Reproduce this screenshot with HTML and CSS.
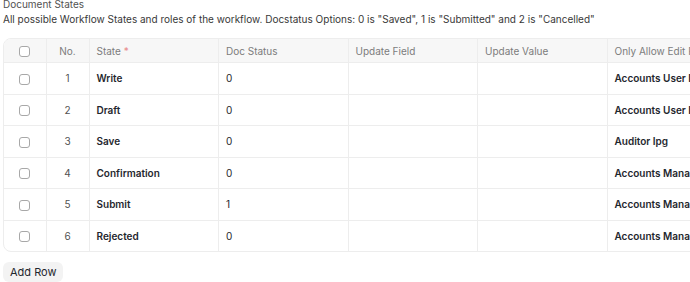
FILE: index.html
```html
<!DOCTYPE html>
<html lang="en">
<head>
    <meta charset="UTF-8">
    <meta name="viewport" content="width=device-width, initial-scale=1.0">
    <title>Document States</title>
    <link rel="stylesheet" href="styles.css">
</head>
<body>
    <div class="field">
        <div class="field-label">Document States</div>
        <p class="field-desc">All possible Workflow States and roles of the workflow. Docstatus Options: 0 is "Saved", 1 is "Submitted" and 2 is "Cancelled"</p>

        <!-- Grid of workflow states -->
        <div class="grid">
            <table>
                <colgroup>
                    <col class="col-check">
                    <col class="col-no">
                    <col class="col-wide">
                    <col class="col-wide">
                    <col class="col-wide">
                    <col class="col-wide">
                    <col class="col-last">
                </colgroup>
                <thead>
                    <tr>
                        <th class="center"><span class="check"></span></th>
                        <th class="center">No.</th>
                        <th>State <span class="reqd">*</span></th>
                        <th>Doc Status</th>
                        <th>Update Field</th>
                        <th>Update Value</th>
                        <th>Only Allow Edit For</th>
                    </tr>
                </thead>
                <tbody>
                    <tr>
                        <td class="center"><span class="check"></span></td>
                        <td class="center num">1</td>
                        <td class="bold">Write</td>
                        <td>0</td>
                        <td></td>
                        <td></td>
                        <td class="bold">Accounts User Ipg</td>
                    </tr>
                    <tr>
                        <td class="center"><span class="check"></span></td>
                        <td class="center num">2</td>
                        <td class="bold">Draft</td>
                        <td>0</td>
                        <td></td>
                        <td></td>
                        <td class="bold">Accounts User Ipg</td>
                    </tr>
                    <tr>
                        <td class="center"><span class="check"></span></td>
                        <td class="center num">3</td>
                        <td class="bold">Save</td>
                        <td>0</td>
                        <td></td>
                        <td></td>
                        <td class="bold">Auditor Ipg</td>
                    </tr>
                    <tr>
                        <td class="center"><span class="check"></span></td>
                        <td class="center num">4</td>
                        <td class="bold">Confirmation</td>
                        <td>0</td>
                        <td></td>
                        <td></td>
                        <td class="bold">Accounts Manager</td>
                    </tr>
                    <tr>
                        <td class="center"><span class="check"></span></td>
                        <td class="center num">5</td>
                        <td class="bold">Submit</td>
                        <td>1</td>
                        <td></td>
                        <td></td>
                        <td class="bold">Accounts Manager</td>
                    </tr>
                    <tr>
                        <td class="center"><span class="check"></span></td>
                        <td class="center num">6</td>
                        <td class="bold">Rejected</td>
                        <td>0</td>
                        <td></td>
                        <td></td>
                        <td class="bold">Accounts Manager</td>
                    </tr>
                </tbody>
            </table>
        </div>

        <button class="btn">Add Row</button>
    </div>
</body>
</html>
```

FILE: styles.css
```css
body {
    font-family: Inter, "Noto Sans", sans-serif;
    font-size: 10px;
    color: #1f272e;
    background-color: #ffffff;
    margin: 0;
    padding: 0;
    overflow: hidden;
}

.field {
    padding-left: 3px;
}

.field-label {
    margin-top: -3px;
    line-height: 14px;
    color: #525252;
}

.field-desc {
    margin: 0;
    line-height: 16px;
    height: 27px;
    color: #383838;
}

.grid {
    width: 780px;
    border: 1px solid #ededed;
    border-radius: 8px;
    overflow: hidden;
}

table {
    width: 100%;
    table-layout: fixed;
    border-collapse: collapse;
}

.col-check { width: 42px; }
.col-no { width: 43px; }
.col-wide { width: 129.5px; }

th, td {
    border-left: 1px solid #ededed;
    padding: 0 7px;
    text-align: left;
    white-space: nowrap;
    overflow: hidden;
}

th:first-child, td:first-child {
    border-left: none;
}

th {
    height: 23px;
    background-color: #f7f7f7;
    color: #7c7c7c;
    font-weight: 400;
    border-bottom: 1px solid #ededed;
}

td {
    height: 30.5px;
    border-top: 1px solid #ededed;
}

tbody tr:first-child td {
    border-top: none;
}

.center {
    text-align: center;
    padding: 0;
}

.num {
    color: #525252;
}

.bold {
    font-weight: 600;
}

.reqd {
    color: #e88a8a;
}

.check {
    display: inline-block;
    width: 9px;
    height: 9px;
    border: 1px solid #a8a8a8;
    border-radius: 3px;
    vertical-align: middle;
    background-color: #ffffff;
}

.btn {
    margin-top: 10px;
    padding: 3px 7px;
    border: none;
    border-radius: 6px;
    background-color: #f3f3f3;
    color: #1f272e;
    font-family: inherit;
    font-size: 11px;
    line-height: 14px;
}
```
